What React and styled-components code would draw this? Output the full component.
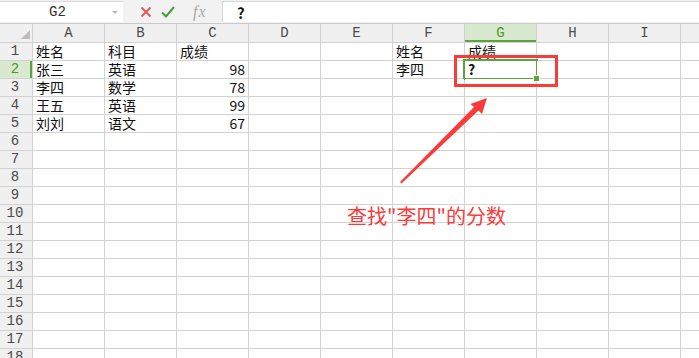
import React from 'react';
import styled, { createGlobalStyle } from 'styled-components';

const GlobalStyle = createGlobalStyle`
  html, body {
    margin: 0;
    padding: 0;
    background: #ffffff;
    overflow: hidden;
  }
  #root {
    width: 699px;
    height: 358px;
  }
`;

const GREEN = '#5ba33b';
const GREEN_BG = '#d8e9d0';
const GRID = '#d2d2d2';
const RED = '#fb3a3a';

const Page = styled.div`
  position: relative;
  width: 699px;
  height: 358px;
  overflow: hidden;
  font-family: "Noto Sans CJK SC", "Liberation Sans", sans-serif;
`;

const TopBar = styled.div`
  height: 23px;
  display: flex;
  background: #f2f2f2;
  border-bottom: 1px solid #c9c9c9;
  box-sizing: content-box;
`;

const NameBox = styled.div`
  width: 123px;
  height: 21px;
  margin-top: 1px;
  background: #fff;
  border-top: 1px solid #d8d8d8;
  box-sizing: border-box;
  display: flex;
  align-items: center;
  position: relative;
  font-family: "Liberation Mono", "DejaVu Sans Mono", monospace;
  font-size: 14px;
  color: #333;
  justify-content: center;
  padding-right: 8px;
`;

const DropArrow = styled.span`
  position: absolute;
  right: 5px;
  top: 9px;
  width: 0;
  height: 0;
  border-left: 3px solid transparent;
  border-right: 3px solid transparent;
  border-top: 3px solid #b5b5b5;
`;

const IconBar = styled.div`
  width: 99px;
  display: flex;
  align-items: center;
  padding-left: 17px;
  gap: 9px;
  box-sizing: border-box;
`;

const Fx = styled.span`
  font-family: "Liberation Serif", serif;
  font-style: italic;
  font-size: 16px;
  color: #a8a8a8;
  margin-left: 9px;
  letter-spacing: 1px;
`;

const FormulaInput = styled.div`
  flex: 1;
  margin-top: 1px;
  height: 21px;
  background: #fff;
  border-top: 1px solid #d8d8d8;
  border-left: 1px solid #d8d8d8;
  box-sizing: border-box;
  display: flex;
  align-items: center;
  padding-left: 14px;
  font-size: 15px;
  font-weight: 700;
  color: #111;
`;

const Sheet = styled.div`
  display: grid;
  grid-template-columns: 32px repeat(9, 71px) 1fr;
  grid-template-rows: 18px repeat(18, 17px);
  gap: 1px;
  background: ${GRID};
`;

const ColHead = styled.div`
  background: ${({ $active }) => ($active ? GREEN_BG : '#f0f0f0')};
  box-shadow: ${({ $active }) => ($active ? `inset 0 -2px 0 ${GREEN}` : 'none')};
  color: ${({ $active }) => ($active ? '#4b9a26' : '#4a4a4a')};
  font-family: "Liberation Mono", "DejaVu Sans Mono", monospace;
  font-size: 14px;
  display: flex;
  align-items: center;
  justify-content: center;
  position: relative;
`;

const Corner = styled(ColHead)`
  &::after {
    content: '';
    position: absolute;
    right: 2px;
    bottom: 3px;
    width: 0;
    height: 0;
    border-left: 9px solid transparent;
    border-bottom: 9px solid #bdbdbd;
  }
`;

const RowHead = styled.div`
  background: ${({ $active }) => ($active ? GREEN_BG : '#f0f0f0')};
  box-shadow: ${({ $active }) => ($active ? `inset -2px 0 0 ${GREEN}` : 'none')};
  color: ${({ $active }) => ($active ? '#4b9a26' : '#4a4a4a')};
  font-family: "Liberation Mono", "DejaVu Sans Mono", monospace;
  font-size: 14px;
  line-height: 17px;
  overflow: hidden;
  display: flex;
  align-items: center;
  justify-content: center;
  padding-right: 2px;
`;

const Cell = styled.div`
  background: #fff;
  position: relative;
  font-size: 14px;
  line-height: 17px;
  height: 17px;
  color: #111;
  padding: 0 3px;
  text-align: ${({ $num }) => ($num ? 'right' : 'left')};
  white-space: nowrap;
  overflow: ${({ $selected }) => ($selected ? 'visible' : 'hidden')};
  font-weight: ${({ $bold }) => ($bold ? 700 : 400)};

  ${({ $selected }) =>
    $selected &&
    `
    &::after {
      content: '';
      position: absolute;
      left: -2px;
      top: -2px;
      right: -2px;
      bottom: -2px;
      border: 2px solid ${GREEN};
      pointer-events: none;
    }
  `}
`;

const FillHandle = styled.span`
  position: absolute;
  right: -4px;
  bottom: -4px;
  width: 5px;
  height: 5px;
  background: ${GREEN};
  border: 1px solid #fff;
  z-index: 2;
`;

const RedBox = styled.div`
  position: absolute;
  left: 454px;
  top: 55px;
  width: 104px;
  height: 32px;
  border: 3px solid ${RED};
  box-sizing: border-box;
  pointer-events: none;
`;

const Arrow = styled.svg`
  position: absolute;
  left: 0;
  top: 0;
  pointer-events: none;
`;

const Note = styled.div`
  position: absolute;
  left: 347px;
  top: 205px;
  font-size: 20px;
  line-height: 22px;
  color: ${RED};
  white-space: nowrap;
`;

const columns = ['A', 'B', 'C', 'D', 'E', 'F', 'G', 'H', 'I', ''];

const data = {
  1: ['姓名', '科目', '成绩', '', '', '姓名', '成绩'],
  2: ['张三', '英语', '98', '', '', '李四', '?'],
  3: ['李四', '数学', '78'],
  4: ['王五', '英语', '99'],
  5: ['刘刘', '语文', '67'],
};

const App = () => {
  const rows = Array.from({ length: 18 }, (_, i) => i + 1);

  return (
    <Page>
      <GlobalStyle />
      <TopBar>
        <NameBox>
          G2
          <DropArrow />
        </NameBox>
        <IconBar>
          <svg width="12" height="12" viewBox="0 0 12 12">
            <path d="M1.5 1.5 L10.5 10.5 M10.5 1.5 L1.5 10.5" stroke="#e25757" strokeWidth="1.8" fill="none" />
          </svg>
          <svg width="14" height="12" viewBox="0 0 14 12">
            <path d="M1 6.5 L5 10.5 L13 1" stroke="#4a9d3c" strokeWidth="2" fill="none" />
          </svg>
          <Fx>fx</Fx>
        </IconBar>
        <FormulaInput>?</FormulaInput>
      </TopBar>

      <Sheet>
        <Corner />
        {columns.map((c, i) => (
          <ColHead key={i} $active={c === 'G'}>{c}</ColHead>
        ))}
        {rows.map((r) => (
          <React.Fragment key={r}>
            <RowHead $active={r === 2}>{r}</RowHead>
            {columns.map((c, ci) => {
              const value = (data[r] && data[r][ci]) || '';
              const isNum = /^\d+$/.test(value);
              const selected = r === 2 && c === 'G';
              return (
                <Cell key={ci} $num={isNum} $selected={selected} $bold={value === '?'}>
                  {value}
                  {selected && <FillHandle />}
                </Cell>
              );
            })}
          </React.Fragment>
        ))}
      </Sheet>

      <RedBox />
      <Arrow width="699" height="358" viewBox="0 0 699 358">
        <polygon
          points="400,182 474,107 470.5,104 487,98 482,114 478.5,110.5 401.5,183.5"
          fill={RED}
        />
      </Arrow>
      <Note>查找"李四"的分数</Note>
    </Page>
  );
};

export default App;
